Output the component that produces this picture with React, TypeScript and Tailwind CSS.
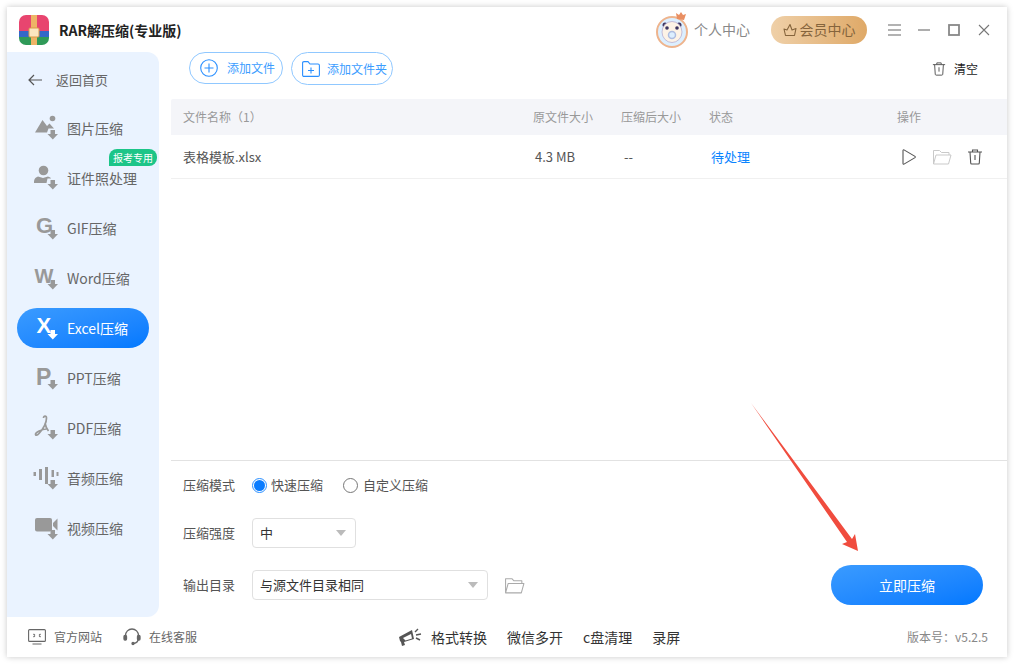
import React from 'react';

const cjk = "font-['Noto_Sans_CJK_SC','Liberation_Sans',sans-serif]";

const DownArrow = () => <path d="M17.500 15h4.500v4h3l-5.200 5.500L14.500 19h3z" />;

const navItems: { label: string; icon: React.ReactNode }[] = [
  {
    label: '图片压缩',
    icon: (
      <>
        <circle cx="19.500" cy="3.500" r="2.800" />
        <path d="M2 17.500 9.500 5l4.500 6 2.500-2.500 4.500 5h-5.500l-1.500 4z" />
      </>
    ),
  },
  {
    label: '证件照处理',
    icon: (
      <>
        <circle cx="10.500" cy="5.500" r="4.800" />
        <path d="M1 18c0-4 1-5.500 4-6.500l5 1.500 5-1.500c1.500.5 2.500 1 3 2h-3.500l-1 4.500z" />
      </>
    ),
  },
  {
    label: 'GIF压缩',
    icon: (
      <text x="3" y="18" fontSize="22" fontWeight="700" fontFamily="Liberation Sans, sans-serif">
        G
      </text>
    ),
  },
  {
    label: 'Word压缩',
    icon: (
      <text x="1.500" y="17.500" fontSize="20" fontWeight="700" fontFamily="Liberation Sans, sans-serif">
        W
      </text>
    ),
  },
  {
    label: 'Excel压缩',
    icon: (
      <text x="3.500" y="18" fontSize="22" fontWeight="700" fontFamily="Liberation Sans, sans-serif">
        X
      </text>
    ),
  },
  {
    label: 'PPT压缩',
    icon: (
      <text x="3" y="20" fontSize="23" fontWeight="700" fontFamily="Liberation Sans, sans-serif">
        P
      </text>
    ),
  },
  {
    label: 'PDF压缩',
    icon: (
      <path
        d="M10.500 3c0-2.500 3-2.500 3 0 0 4.500-3.500 11-7.500 15.500-2 2.200-3.500 2-3.500.8 0-2 6-5 11-5.300M12 8c.5 3 1.500 5.500 3.500 8"
        fill="none"
        stroke="currentColor"
        strokeWidth="1.700"
      />
    ),
  },
  {
    label: '音频压缩',
    icon: (
      <>
        <rect x="0.500" y="7" width="2.500" height="4" />
        <rect x="6" y="4" width="3" height="11" />
        <rect x="12" y="2" width="3" height="17" />
        <rect x="18.500" y="5" width="2.500" height="7" />
        <rect x="23.500" y="7" width="2" height="4" />
      </>
    ),
  },
  {
    label: '视频压缩',
    icon: (
      <>
        <rect x="2" y="3" width="17" height="13.500" rx="2" />
        <path d="M24.500 3.500v12l-4.500-4.500v-3z" />
      </>
    ),
  },
];

function Sidebar() {
  return (
    <aside className="w-[152px] shrink-0 rounded-r-[12px] bg-[#eaf3ff] pt-[8px]">
      <div className="flex h-[40px] items-center pl-[21px] text-[13px] text-[#666]">
        <svg width="14" height="12" viewBox="0 0 14 12" fill="none" stroke="#555" strokeWidth="1.200">
          <path d="M14 6H1M6 1 1 6l5 5" />
        </svg>
        <span className="ml-[14px]">返回首页</span>
      </div>
      <div className="mt-[8px] flex flex-col gap-[10px] px-[10px]">
        {navItems.map((item, i) => {
          const active = item.label === 'Excel压缩';
          return (
            <div
              key={item.label}
              className={`relative flex h-[40px] items-center rounded-full pl-[16px] ${
                active
                  ? 'bg-gradient-to-br from-[#3a9bff] to-[#0078ff] text-white'
                  : 'text-[#666]'
              }`}
            >
              <svg
                width="26"
                height="26"
                viewBox="0 0 26 26"
                fill="currentColor"
                className={`overflow-visible ${active ? 'text-white' : 'text-[#999]'}`}
              >
                {item.icon}
                <DownArrow />
              </svg>
              <span className="ml-[8px] text-[14px]">{item.label}</span>
              {i === 1 && (
                <span className="absolute right-[-8px] top-[-9px] flex h-[17px] w-[48px] items-center justify-center rounded-t-[8px] rounded-br-[8px] bg-[#1cc588] text-[10px] text-white">
                  报考专用
                </span>
              )}
            </div>
          );
        })}
      </div>
    </aside>
  );
}

const Logo = () => (
  <svg width="30" height="30" viewBox="0 0 30 30">
    <defs>
      <clipPath id="logoClip">
        <rect width="30" height="30" rx="7" />
      </clipPath>
    </defs>
    <g clipPath="url(#logoClip)">
      <rect width="30" height="17" fill="#e8456f" />
      <rect y="16" width="30" height="7" fill="#3468c8" />
      <rect y="22" width="30" height="8" fill="#2f9a58" />
      <rect x="12" width="6" height="30" fill="#eeb466" />
      <rect x="10" y="13" width="10" height="9" rx="1" fill="#fbe6c0" stroke="#d99a48" strokeWidth="1" />
    </g>
  </svg>
);

const Avatar = () => (
  <svg width="36" height="36" viewBox="0 0 36 36">
    <circle cx="17" cy="20" r="15" fill="#dcefff" stroke="#eeb48d" strokeWidth="2" />
    <circle cx="10" cy="13" r="2.500" fill="#3d3560" />
    <circle cx="24" cy="13" r="2.500" fill="#3d3560" />
    <ellipse cx="17" cy="20" rx="10" ry="10.500" fill="#fdf3e6" stroke="#b9aed0" strokeWidth="0.800" />
    <circle cx="12" cy="16" r="1.800" fill="#3d3560" />
    <circle cx="22" cy="16" r="1.800" fill="#3d3560" />
    <circle cx="17" cy="23" r="3.500" fill="#dcefff" stroke="#aebde0" strokeWidth="1.500" />
    <path d="M22 7 21 1l3 2 2-3 2 3 3-1-2 6z" fill="#e98f62" />
  </svg>
);

function TitleBar() {
  return (
    <header className="flex h-[45px] shrink-0 items-center pl-[12px]">
      <Logo />
      <span className="ml-[10px] text-[14px] font-bold leading-none text-[#222]">RAR解压缩(专业版)</span>
      <div className="ml-auto flex items-center">
        <Avatar />
        <span className="ml-[3px] text-[14px] text-[#888]">个人中心</span>
        <div className="ml-[21px] flex h-[28px] w-[96px] items-center justify-center rounded-full bg-gradient-to-r from-[#efd0a8] to-[#dfa967] text-[14px] text-[#85643c]">
          <svg width="14" height="14" viewBox="0 0 14 14" fill="none" stroke="#85643c" strokeWidth="1.100">
            <path d="M1 6l3 1 3-5.500L9 7l4-1.500-1.500 7H2.500z" strokeLinejoin="round" />
          </svg>
          <span className="ml-[3px]">会员中心</span>
        </div>
        <svg width="13" height="12" viewBox="0 0 13 12" stroke="#999" strokeWidth="1.300" className="ml-[21px]">
          <path d="M0 1h13M0 6h13M0 11h13" />
        </svg>
        <svg width="12" height="12" viewBox="0 0 12 12" stroke="#777" strokeWidth="1.200" className="ml-[17px]">
          <path d="M0 6h12" />
        </svg>
        <svg width="12" height="12" viewBox="0 0 12 12" fill="none" stroke="#888" strokeWidth="1.800" className="ml-[18px]">
          <rect x="1" y="1" width="10" height="10" />
        </svg>
        <svg width="12" height="12" viewBox="0 0 12 12" stroke="#777" strokeWidth="1.100" className="ml-[18px] mr-[17px]">
          <path d="M1 1l10 10M11 1 1 11" />
        </svg>
      </div>
    </header>
  );
}

const TrashIcon = ({ size = 16 }: { size?: number }) => (
  <svg width={size} height={size} viewBox="0 0 16 16" fill="none" stroke="#555" strokeWidth="1.100">
    <path d="M1 3h14M5.500 3V1h5v2M3 3l.7 11c0 .6.5 1 1 1h6.600c.5 0 1-.4 1-1L13 3M8 6v5" />
  </svg>
);

const FolderIcon = ({ color = '#bbb', w = 20 }: { color?: string; w?: number }) => (
  <svg width={w} height={Math.round(w * 0.8)} viewBox="0 0 20 16" fill="none" stroke={color} strokeWidth="1">
    <path d="M1.500 15V1.500h6l2 2h7.500V6M1.500 15 4 6h15l-2.500 9z" strokeLinejoin="round" />
  </svg>
);

function Toolbar() {
  return (
    <div className="flex h-[47px] items-start pl-[30px] pr-[29px] text-[12px] text-[#3b9dff]">
      <button className="flex h-[32px] w-[94px] items-center rounded-full border border-[#90c8ff] pl-[10px]">
        <svg width="18" height="18" viewBox="0 0 18 18" fill="none" stroke="#2a8fff" strokeWidth="1.100">
          <circle cx="9" cy="9" r="8.300" />
          <path d="M9 4.500v9M4.500 9h9" />
        </svg>
        <span className="ml-[9px]">添加文件</span>
      </button>
      <button className="ml-[8px] flex h-[33px] w-[102px] items-center rounded-full border border-[#90c8ff] pl-[10px]">
        <svg width="18" height="16" viewBox="0 0 18 16" fill="none" stroke="#2a8fff" strokeWidth="1.100">
          <path d="M.6 2c0-.8.5-1.400 1.400-1.400h4l2 2.400h8c.8 0 1.400.6 1.400 1.400V14c0 .8-.6 1.400-1.400 1.400H2c-.9 0-1.400-.6-1.400-1.400z" />
          <path d="M9 6.500v6M6 9.500h6" />
        </svg>
        <span className="ml-[7px]">添加文件夹</span>
      </button>
      <div className="ml-auto mt-[8px] flex items-center text-[12px] text-[#222]">
        <TrashIcon size={14} />
        <span className="ml-[8px]">清空</span>
      </div>
    </div>
  );
}

function FileTable() {
  return (
    <div className="ml-[12px] flex-1">
      <div className="grid h-[36px] grid-cols-[350px_88px_89px_187px_1fr] items-center rounded-tl-[2px] bg-[#f4f5f9] pl-[12px] text-[12px] text-[#999]">
        <span>文件名称（1）</span>
        <span>原文件大小</span>
        <span>压缩后大小</span>
        <span className="-ml-[1px]">状态</span>
        <span>操作</span>
      </div>
      <div className="grid h-[44px] grid-cols-[350px_88px_89px_187px_1fr] items-center border-b border-[#f0f0f0] pl-[12px] text-[13px] text-[#555]">
        <span>表格模板.xlsx</span>
        <span className="pl-[2px]">4.3 MB</span>
        <span className="pl-[3px]">--</span>
        <span className="pl-[1px] text-[#0a84ff]">待处理</span>
        <div className="flex items-center pl-[4px]">
          <svg width="16" height="16" viewBox="0 0 16 16" fill="none" stroke="#555" strokeWidth="1.100">
            <path d="M2 1.500c0-.6.5-.9 1-.6l11 6.500c.4.300.4.900 0 1.200L3 15.100c-.5.300-1 0-1-.6z" />
          </svg>
          <span className="ml-[15px] flex">
            <FolderIcon color="#c9c9c9" w={20} />
          </span>
          <span className="ml-[15px] flex">
            <TrashIcon size={16} />
          </span>
        </div>
      </div>
    </div>
  );
}

const Caret = () => (
  <span className="h-0 w-0 border-x-[5px] border-t-[6px] border-x-transparent border-t-[#bbb]" />
);

function SettingsPanel() {
  return (
    <div className="ml-[12px] h-[157px] shrink-0 border-t border-[#e2e2e2] pl-[12px] pr-[24px] pt-[14px] text-[13px] text-[#555]">
      <div className="flex h-[20px] items-center">
        <span className="w-[69px]">压缩模式</span>
        <span className="flex h-[15px] w-[15px] items-center justify-center rounded-full border border-[#2a8fff]">
          <span className="h-[11px] w-[11px] rounded-full bg-[#0a7cff]" />
        </span>
        <span className="ml-[4px]">快速压缩</span>
        <span className="ml-[20px] h-[15px] w-[15px] rounded-full border border-[#777]" />
        <span className="ml-[5px]">自定义压缩</span>
      </div>
      <div className="mt-[23px] flex h-[30px] items-center">
        <span className="w-[69px]">压缩强度</span>
        <div className="flex h-[30px] w-[104px] items-center justify-between rounded-[4px] border border-[#e0e0e0] pl-[7px] pr-[9px] text-[#333]">
          <span>中</span>
          <Caret />
        </div>
      </div>
      <div className="mt-[22px] flex h-[30px] items-center">
        <span className="w-[69px]">输出目录</span>
        <div className="flex h-[30px] w-[236px] items-center justify-between rounded-[4px] border border-[#e0e0e0] pl-[7px] pr-[9px] text-[#333]">
          <span>与源文件目录相同</span>
          <Caret />
        </div>
        <span className="ml-[16px] flex">
          <FolderIcon color="#aaa" w={21} />
        </span>
        <button className="-my-[5px] ml-auto h-[40px] w-[152px] rounded-full bg-gradient-to-br from-[#3a9bff] to-[#0078ff] text-[14px] text-white">
          立即压缩
        </button>
      </div>
    </div>
  );
}

function Footer() {
  return (
    <footer className="flex h-[40px] shrink-0 items-center pl-[21px] pr-[19px] text-[12px] text-[#666]">
      <svg width="18" height="16" viewBox="0 0 18 16" fill="none" stroke="#666" strokeWidth="1.100">
        <rect x=".6" y=".6" width="16.800" height="11.800" rx="1" />
        <path d="M4.500 15h9M7 6.500 5.500 5M7 6.500 5.500 8M11 6.500 12.500 5M11 6.500 12.500 8" />
      </svg>
      <span className="ml-[8px]">官方网站</span>
      <svg width="18" height="18" viewBox="0 0 18 18" fill="none" stroke="#666" strokeWidth="1.300" className="ml-[21px]">
        <path d="M2.500 10V7.500a6.500 6.500 0 0 1 13 0V10c0 3-2 5-5 5.500" />
        <rect x="1" y="7.500" width="2.500" height="4.500" rx="1" fill="#666" />
        <rect x="14.500" y="7.500" width="2.500" height="4.500" rx="1" fill="#666" />
        <circle cx="10" cy="15.500" r="1" fill="#666" />
      </svg>
      <span className="ml-[8px]">在线客服</span>
      <svg width="24" height="20" viewBox="0 0 24 20" fill="#555" className="ml-[201px]">
        <path d="M1 10l13-7 2 9-10 3 1 3-3 1-1-4-1-1z" />
        <path d="M5 11l8-4 1 4.500-6.500 2z" fill="#fff" />
        <path d="M17 5l3-3M18 8l5-1M18 11l4 2" stroke="#555" strokeWidth="1.400" />
      </svg>
      <div className="ml-[9px] flex gap-[20px] text-[14px] text-[#333]">
        <span>格式转换</span>
        <span>微信多开</span>
        <span>c盘清理</span>
        <span>录屏</span>
      </div>
      <span className="ml-auto text-[#888]">版本号：v5.2.5</span>
    </footer>
  );
}

export default function App() {
  return (
    <div className={`h-[664px] w-[1014px] overflow-hidden bg-white p-[7px] ${cjk}`}>
      <div className="relative flex h-[650px] w-[1000px] flex-col bg-white shadow-[0_0_6px_rgba(0,0,0,0.22)]">
        <TitleBar />
        <div className="flex min-h-0 flex-1">
          <Sidebar />
          <main className="flex min-w-0 flex-1 flex-col">
            <Toolbar />
            <FileTable />
            <SettingsPanel />
          </main>
        </div>
        <Footer />
        {/* red annotation arrow over the window */}
        <svg width="120" height="160" viewBox="0 0 120 160" className="absolute left-[740px] top-[392px]">
          <path d="M4 4 105 140 108 135 111 152 95 145 100 143z" fill="#f04c3e" />
        </svg>
      </div>
    </div>
  );
}
